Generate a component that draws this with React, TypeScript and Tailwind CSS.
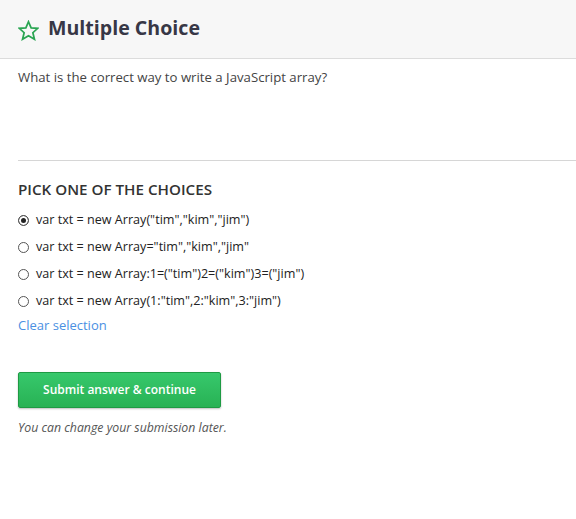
import React from "react";

const options = [
  'var txt = new Array("tim","kim","jim")',
  'var txt = new Array="tim","kim","jim"',
  'var txt = new Array:1=("tim")2=("kim")3=("jim")',
  'var txt = new Array(1:"tim",2:"kim",3:"jim")',
];

export default function App() {
  return (
    <div className="w-[576px] h-[519px] bg-white text-[#333] overflow-hidden" style={{ fontFamily: '"Open Sans", sans-serif' }}>
      <div className="h-[59px] bg-[#f7f7f7] border-b border-[#dcdcdc] flex items-center pl-[18px] gap-[9px]">
        <svg width="21" height="21" viewBox="0 0 24 24" fill="none" stroke="#2aa552" strokeWidth="2" strokeLinejoin="miter" className="mt-[3px]">
          <polygon points="12,2 15,9 22.5,9.5 17,14.5 18.8,22 12,18 5.2,22 7,14.5 1.5,9.5 9,9" />
        </svg>
        <h1 className="text-[19.6px] font-bold text-[#373746] leading-none -mt-[2px]">Multiple Choice</h1>
      </div>
      <div className="pl-[18px]">
        <p className="text-[13.2px] leading-[20px] text-[#444] mt-[8px] h-[93px]">What is the correct way to write a JavaScript array?</p>
        <div className="border-t border-[#d6d6d6]" />
        <h2 className="text-[15.2px] font-semibold uppercase text-[#333] mt-[18px] leading-[20px]">Pick one of the choices</h2>
        <div className="mt-[8px] flex flex-col">
          {options.map((o, i) => (
            <label key={i} className="flex items-center h-[27px] text-[12.6px] text-[#222]">
              <input
                type="radio"
                name="c"
                defaultChecked={i === 0}
                className="appearance-none w-[11px] h-[11px] m-0 mr-[7px] rounded-full border border-[#555] bg-white checked:bg-[#222] checked:shadow-[inset_0_0_0_2px_white]"
              />
              <span>{o}</span>
            </label>
          ))}
        </div>
        <a className="block text-[13px] text-[#4a90e2] mt-[0px] leading-[20px]">Clear selection</a>
        <button className="mt-[37px] w-[203px] h-[36px] rounded-[2px] border border-[#1e9a43] bg-gradient-to-b from-[#37c86c] to-[#28b254] text-white text-[12px] font-semibold shadow-[0_1px_2px_rgba(0,0,0,0.25)]">
          Submit answer &amp; continue
        </button>
        <p className="mt-[11px] text-[12.3px] italic text-[#555]">You can change your submission later.</p>
      </div>
    </div>
  );
}
